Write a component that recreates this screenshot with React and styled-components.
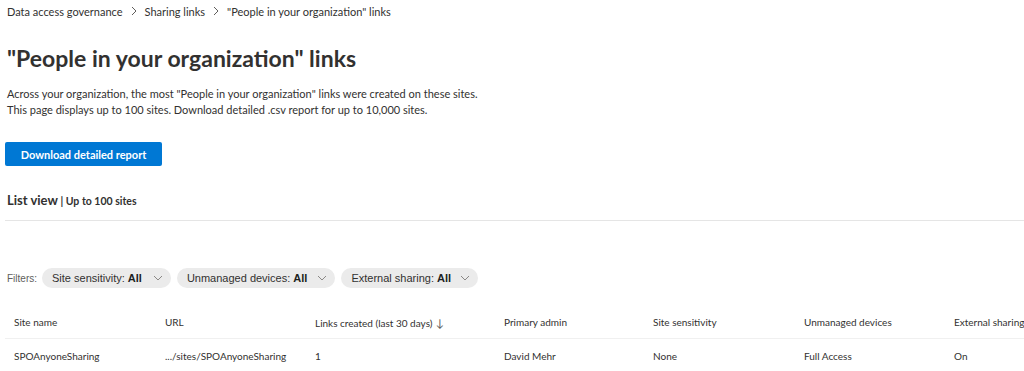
import React from "react";
import styled, { createGlobalStyle } from "styled-components";

const GlobalStyle = createGlobalStyle`
  body {
    margin: 0;
    background: #ffffff;
    font-family: Lato, "Noto Sans", sans-serif;
    color: #323130;
  }
`;

const Page = styled.div`
  width: 1024px;
  height: 371px;
  overflow: hidden;
`;

const Breadcrumb = styled.nav`
  display: flex;
  align-items: center;
  gap: 7px;
  height: 22px;
  padding-left: 7px;
  font-size: 11px;
  color: #323130;
`;

const Chevron = () => (
  <svg width="8" height="10" viewBox="0 0 8 10">
    <path d="M2 1 L6 5 L2 9" fill="none" stroke="#605e5c" strokeWidth="1" />
  </svg>
);

const Content = styled.div`
  padding: 0 5px 0 7px;
`;

const Title = styled.h1`
  margin: 21px 0 0;
  font-size: 23px;
  font-weight: 700;
  line-height: 30px;
  color: #323130;
`;

const Description = styled.p`
  margin: 13px 0 0;
  font-size: 11px;
  line-height: 16px;
  color: #323130;
`;

const PrimaryButton = styled.button`
  display: block;
  margin: 24px 0 0 -2px;
  width: 157px;
  height: 24px;
  border: none;
  border-radius: 2px;
  background: #0078d4;
  color: #ffffff;
  font-family: inherit;
  font-size: 11px;
  font-weight: 700;
  padding: 0;
`;

const ViewLabel = styled.div`
  margin-top: 26px;
  font-size: 10.5px;
  font-weight: 700;
  color: #323130;
  line-height: 16px;
  b {
    font-size: 13px;
    font-weight: 700;
  }
`;

const Divider = styled.hr`
  margin: 11px -5px 0 -2px;
  border: none;
  border-top: 1px solid #e5e5e5;
`;

const FilterBar = styled.div`
  display: flex;
  align-items: center;
  gap: 6px;
  margin-top: 47px;
  font-family: "Liberation Sans", Arial, sans-serif;
  font-size: 11px;
  color: #605e5c;
`;

const Pill = styled.div`
  display: flex;
  align-items: center;
  height: 20px;
  padding: 0 7px 0 10px;
  border-radius: 10px;
  background: #ebebeb;
  color: #323130;
  gap: ${(p) => p.$gap}px;
  b {
    color: #201f1e;
  }
`;

const FilterLabel = styled.span`
  font-size: 10px;
  margin-right: -1px;
`;

const Caret = () => (
  <svg width="12" height="8" viewBox="0 0 12 8">
    <path d="M2 2 L6 6 L10 2" fill="none" stroke="#8a8886" strokeWidth="1" />
  </svg>
);

const Table = styled.div`
  margin: 18px -5px 0 -2px;
  font-size: 10px;
  color: #323130;
`;

const Row = styled.div`
  display: grid;
  grid-template-columns: 151px 150px 189px 149px 151px 150px 1fr;
  align-items: center;
  height: ${(p) => (p.$header ? 32 : 34)}px;
  padding-left: 9px;
  border-bottom: ${(p) => (p.$header ? "1px solid #f0f0f0" : "none")};
  white-space: nowrap;
`;

const Cell = styled.div``;

const SortArrow = styled.span`
  margin-left: 3px;
  color: #605e5c;
  font-size: 11px;
`;

const filters = [
  { label: "Site sensitivity", value: "All", gap: 10 },
  { label: "Unmanaged devices", value: "All", gap: 9 },
  { label: "External sharing", value: "All", gap: 8 },
];

const columns = [
  "Site name",
  "URL",
  "Links created (last 30 days)",
  "Primary admin",
  "Site sensitivity",
  "Unmanaged devices",
  "External sharing",
];

const rows = [
  ["SPOAnyoneSharing", ".../sites/SPOAnyoneSharing", "1", "David Mehr", "None", "Full Access", "On"],
];

export default function App() {
  return (
    <Page>
      <GlobalStyle />
      <Breadcrumb>
        <span>Data access governance</span>
        <Chevron />
        <span>Sharing links</span>
        <Chevron />
        <span>"People in your organization" links</span>
      </Breadcrumb>
      <Content>
        <Title>"People in your organization" links</Title>
        <Description>
          Across your organization, the most "People in your organization" links were created on these sites.
          <br />
          This page displays up to 100 sites. Download detailed .csv report for up to 10,000 sites.
        </Description>
        <PrimaryButton>Download detailed report</PrimaryButton>
        <ViewLabel>
          <b>List view</b> | Up to 100 sites
        </ViewLabel>
        <Divider />
        <FilterBar>
          <FilterLabel>Filters:</FilterLabel>
          {filters.map((f) => (
            <Pill key={f.label} $gap={f.gap}>
              <span>
                {f.label}: <b>{f.value}</b>
              </span>
              <Caret />
            </Pill>
          ))}
        </FilterBar>
        <Table>
          <Row $header>
            {columns.map((c, i) => (
              <Cell key={c}>
                {c}
                {i === 2 && <SortArrow>↓</SortArrow>}
              </Cell>
            ))}
          </Row>
          {rows.map((r) => (
            <Row key={r[0]}>
              {r.map((v, i) => (
                <Cell key={i}>{v}</Cell>
              ))}
            </Row>
          ))}
        </Table>
      </Content>
    </Page>
  );
}
